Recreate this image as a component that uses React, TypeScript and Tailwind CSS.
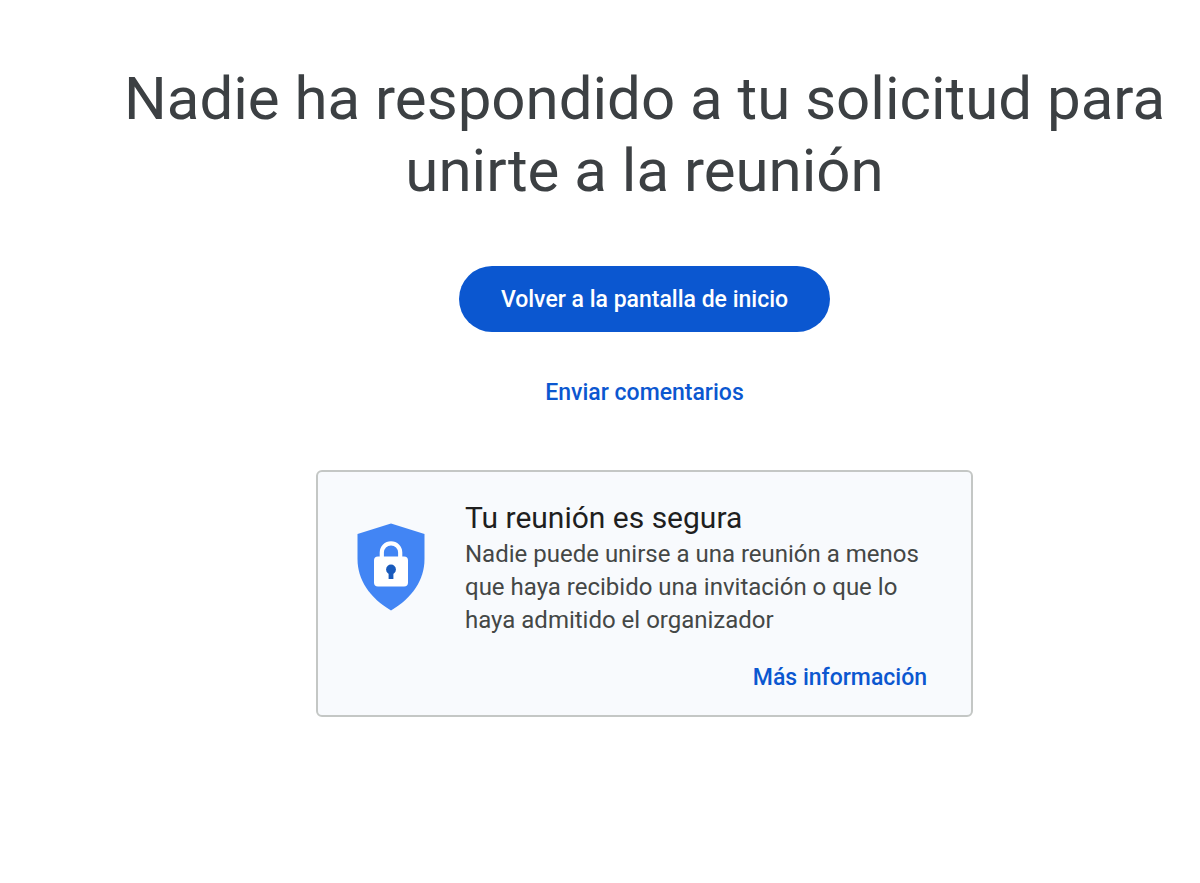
function ShieldLock() {
  return (
    <svg viewBox="0 0 68 88" className="h-[88px] w-[68px] shrink-0" aria-hidden="true">
      <path
        d="M34 0.5 L67.5 11 V36 C67.5 57 55 75 34 87.5 C13 75 0.5 57 0.5 36 V11 Z"
        fill="#4285f4"
      />
      <path d="M24.8 36 V29.5 A9.2 9.2 0 0 1 43.2 29.5 V36" fill="none" stroke="#fff" strokeWidth="4.2" />
      <rect x="17" y="33.5" width="34" height="30" rx="4" fill="#fff" />
      <circle cx="34" cy="46.5" r="4.9" fill="#185abc" />
      <rect x="31.6" y="48" width="4.8" height="8" fill="#185abc" />
    </svg>
  );
}

export default function App() {
  return (
    <main className="flex min-h-screen flex-col items-center bg-white pr-4 pl-[105px] pt-[63px] pb-16 font-['Roboto',sans-serif]">
      <h1 className="max-w-[1060px] text-center text-[60px] leading-[72px] font-normal text-[#3c4043]">
        Nadie ha respondido a tu solicitud para unirte a la reunión
      </h1>

      <button
        type="button"
        className="mt-[59px] h-[66px] rounded-full bg-[#0b57d0] px-[42px] pt-0.5 text-[23px] font-medium text-white"
      >
        Volver a la pantalla de inicio
      </button>

      <a href="#comentarios" className="mt-[45px] text-[23px] leading-8 font-medium text-[#0b57d0]">
        Enviar comentarios
      </a>

      <section className="mt-[61px] flex w-full max-w-[657px] flex-col rounded-md border-2 border-[#c4c7c5] bg-[#f8fafd] pr-10 pl-[39px] pt-[26px] pb-[21px]">
        <div className="flex gap-10">
          <div className="pt-[25px]">
            <ShieldLock />
          </div>
          <div>
            <h2 className="text-[30px] leading-10 font-normal text-[#1f1f1f]">Tu reunión es segura</h2>
            <p className="text-2xl leading-[33px] text-[#444746]">
              Nadie puede unirse a una reunión a menos que haya recibido una invitación o que lo haya
              admitido el organizador
            </p>
          </div>
        </div>
        <a
          href="#informacion"
          className="mt-[25px] mr-1 self-end text-[23px] leading-8 font-medium text-[#0b57d0]"
        >
          Más información
        </a>
      </section>
    </main>
  );
}
